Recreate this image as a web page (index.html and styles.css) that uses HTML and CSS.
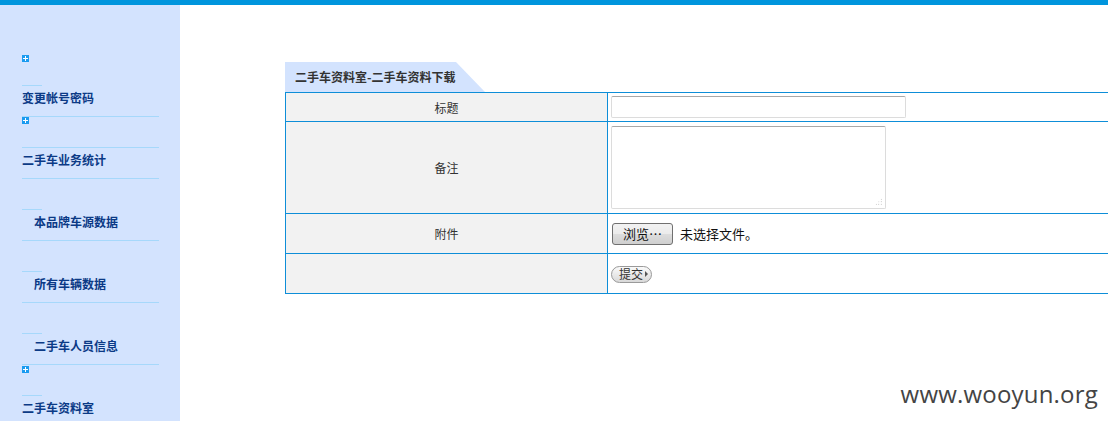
FILE: index.html
```html
<!DOCTYPE html>
<html>
<head>
<meta charset="utf-8">
<link rel="stylesheet" href="styles.css">
</head>
<body>
<div class="topbar"></div>
<div class="page">
  <div class="sidebar">
    <div class="plus-block"><span class="plus"></span></div>
    <div class="line short"></div>
    <div class="item">变更帐号密码</div>
    <div class="line long"></div>
    <div class="plus-block"><span class="plus"></span></div>
    <div class="line long"></div>
    <div class="item">二手车业务统计</div>
    <div class="line long"></div>
    <div class="spacer"></div>
    <div class="line short"></div>
    <div class="item sub">本品牌车源数据</div>
    <div class="line long"></div>
    <div class="spacer"></div>
    <div class="line short"></div>
    <div class="item sub">所有车辆数据</div>
    <div class="line long"></div>
    <div class="spacer"></div>
    <div class="line short"></div>
    <div class="item sub">二手车人员信息</div>
    <div class="line long"></div>
    <div class="plus-block low"><span class="plus"></span></div>
    <div class="line short"></div>
    <div class="item">二手车资料室</div>
  </div>
  <div class="main">
    <div class="tab">二手车资料室-二手车资料下载</div>
    <table class="form">
      <tr class="r1">
        <td class="label">标题</td>
        <td class="field"><div class="input"></div></td>
      </tr>
      <tr class="r2">
        <td class="label">备注</td>
        <td class="field"><div class="textarea"><span class="grip"></span></div></td>
      </tr>
      <tr class="r3">
        <td class="label">附件</td>
        <td class="field"><span class="browse">浏览…</span><span class="nofile">未选择文件。</span></td>
      </tr>
      <tr class="r4">
        <td class="label"></td>
        <td class="field"><span class="submit">提交<span class="tri"></span></span></td>
      </tr>
    </table>
  </div>
</div>
<div class="watermark">www.wooyun.org</div>
</body>
</html>
```

FILE: styles.css
```css
html, body {
  margin: 0;
  padding: 0;
  background: #ffffff;
  overflow: hidden;
}
body {
  font-family: "Noto Sans CJK SC", "Noto Sans", sans-serif;
  font-size: 12px;
  width: 1108px;
  height: 421px;
  position: relative;
}
.topbar {
  height: 5px;
  background: #0095dd;
}
.page {
  display: flex;
  height: 416px;
}
.sidebar {
  width: 180px;
  flex: none;
  background: #d3e3fe;
  padding-top: 50px;
  padding-left: 22px;
  box-sizing: border-box;
  overflow: hidden;
}
.plus-block {
  height: 30px;
}
.plus-block.low {
  padding-top: 1px;
  height: 29px;
}
.plus {
  display: block;
  width: 7px;
  height: 7px;
  background: #1a9bf0;
  position: relative;
}
.plus::before, .plus::after {
  content: "";
  position: absolute;
  background: #ffffff;
}
.plus::before {
  left: 1px;
  top: 3px;
  width: 5px;
  height: 1px;
}
.plus::after {
  left: 3px;
  top: 1px;
  width: 1px;
  height: 5px;
}
.line {
  height: 1px;
  background: #a6d8fb;
}
.line.short {
  width: 20px;
}
.line.long {
  width: 137px;
}
.spacer {
  height: 30px;
}
.item {
  height: 30px;
  line-height: 24px;
  font-weight: bold;
  color: #0b3a86;
  white-space: nowrap;
}
.item.sub {
  padding-left: 12px;
}
.main {
  flex: 1;
  overflow: hidden;
  padding-top: 57px;
  padding-left: 105px;
}
.tab {
  width: 200px;
  height: 30px;
  box-sizing: border-box;
  padding-left: 10px;
  line-height: 30px;
  background: #d3e3fe;
  clip-path: polygon(0 0, 171px 0, 200px 100%, 0 100%);
  font-weight: bold;
  color: #333333;
}
.form {
  border-collapse: collapse;
  width: 1000px;
  border: 1px solid #0e8ed8;
}
.form td {
  border: 1px solid #0e8ed8;
  padding: 0;
}
.label {
  width: 321px;
  background: #f2f2f2;
  text-align: center;
  color: #333333;
}
.field {
  padding-left: 3px !important;
  vertical-align: middle;
}
.r1 td { height: 28px; }
.r2 td { height: 91px; }
.r3 td { height: 39px; }
.r4 td { height: 39px; }
.input {
  width: 295px;
  height: 22px;
  box-sizing: border-box;
  border: 1px solid #dcdcdc;
  border-top-color: #a8a8a8;
  border-radius: 2px;
  background: #fff;
}
.textarea {
  width: 275px;
  height: 83px;
  box-sizing: border-box;
  border: 1px solid #dcdcdc;
  border-top-color: #a8a8a8;
  border-radius: 2px;
  background: #fff;
  position: relative;
}
.grip {
  position: absolute;
  right: 3px;
  bottom: 3px;
  width: 7px;
  height: 7px;
  background:
    radial-gradient(circle, #b0b0b0 0.6px, transparent 0.8px) 0 0 / 2.5px 2.5px;
  clip-path: polygon(100% 0, 100% 100%, 0 100%);
}
.browse {
  display: inline-block;
  margin-left: 1px;
  width: 61px;
  height: 22px;
  box-sizing: border-box;
  border: 1px solid #707070;
  border-radius: 3px;
  background: linear-gradient(#f2f2f2 0%, #ebebeb 50%, #dddddd 51%, #cfcfcf 100%);
  text-align: center;
  line-height: 19px;
  font-size: 13px;
  color: #111;
  vertical-align: middle;
  font-family: "Noto Sans CJK SC", sans-serif;
}
.nofile {
  display: inline-block;
  margin-left: 7px;
  font-size: 13px;
  color: #111;
  vertical-align: middle;
}
.submit {
  display: inline-block;
  margin-left: 0;
  width: 41px;
  height: 17px;
  box-sizing: border-box;
  border: 1px solid #9a9a9a;
  border-radius: 9px;
  background: linear-gradient(#fafafa, #e6e6e6 60%, #d8d8d8);
  font-size: 12px;
  line-height: 14px;
  color: #333;
  padding-left: 7px;
  position: relative;
  vertical-align: middle;
}
.tri {
  position: absolute;
  right: 3px;
  top: 4px;
  width: 0;
  height: 0;
  border-top: 3px solid transparent;
  border-bottom: 3px solid transparent;
  border-left: 3px solid #555;
}
.watermark {
  position: absolute;
  right: 10px;
  top: 377px;
  font-family: "Open Sans", "Noto Sans", sans-serif;
  font-size: 24px;
  color: #444444;
  letter-spacing: 0.2px;
}
```
